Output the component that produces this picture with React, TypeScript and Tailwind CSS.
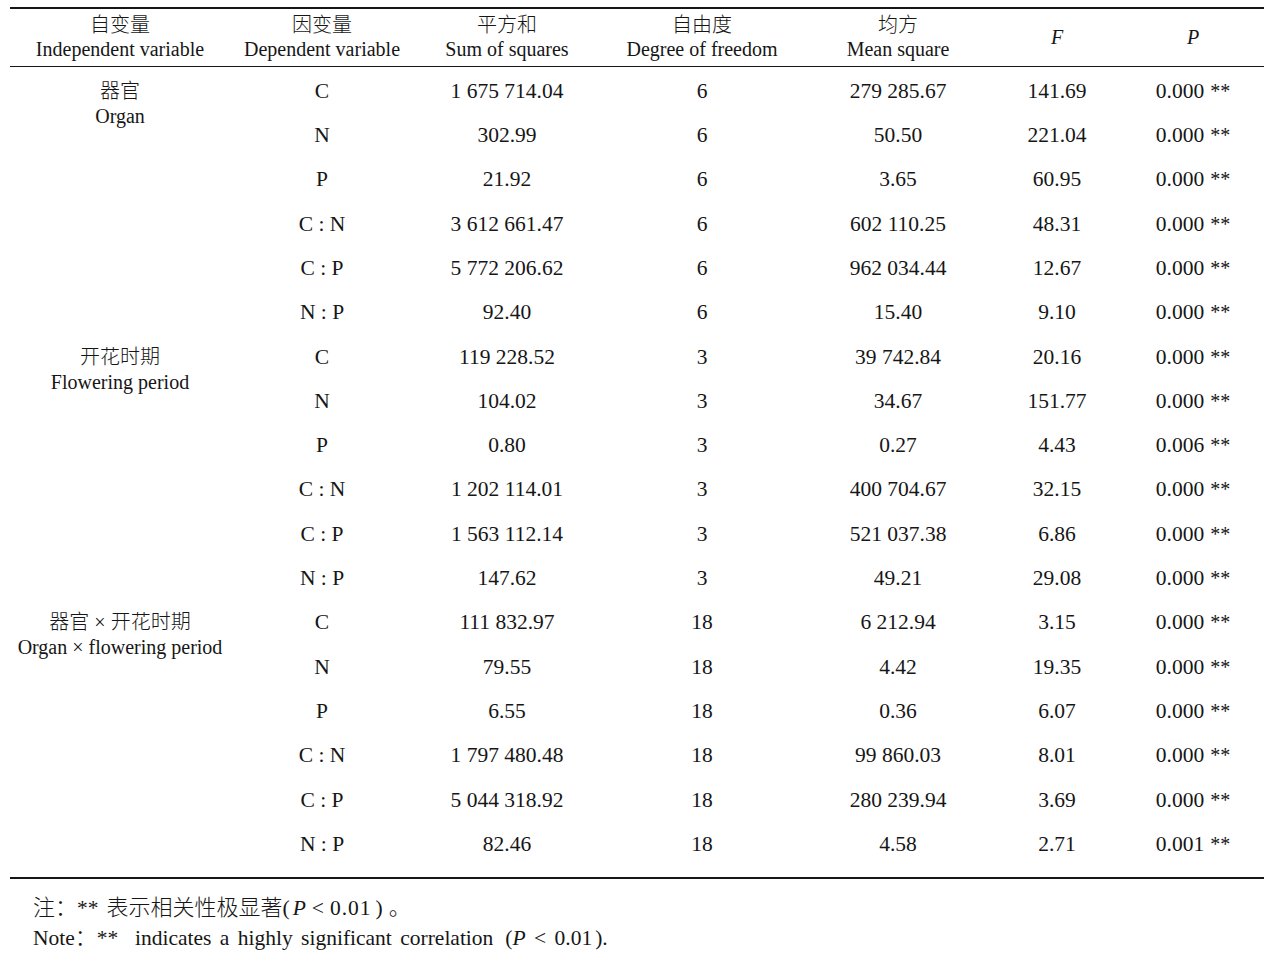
import React from "react";

type Row = [string, string, string, string, string, string];

const groups: { zh: string; en: string; rows: Row[] }[] = [
  {
    zh: "器官",
    en: "Organ",
    rows: [
      ["C", "1 675 714.04", "6", "279 285.67", "141.69", "0.000 **"],
      ["N", "302.99", "6", "50.50", "221.04", "0.000 **"],
      ["P", "21.92", "6", "3.65", "60.95", "0.000 **"],
      ["C : N", "3 612 661.47", "6", "602 110.25", "48.31", "0.000 **"],
      ["C : P", "5 772 206.62", "6", "962 034.44", "12.67", "0.000 **"],
      ["N : P", "92.40", "6", "15.40", "9.10", "0.000 **"],
    ],
  },
  {
    zh: "开花时期",
    en: "Flowering period",
    rows: [
      ["C", "119 228.52", "3", "39 742.84", "20.16", "0.000 **"],
      ["N", "104.02", "3", "34.67", "151.77", "0.000 **"],
      ["P", "0.80", "3", "0.27", "4.43", "0.006 **"],
      ["C : N", "1 202 114.01", "3", "400 704.67", "32.15", "0.000 **"],
      ["C : P", "1 563 112.14", "3", "521 037.38", "6.86", "0.000 **"],
      ["N : P", "147.62", "3", "49.21", "29.08", "0.000 **"],
    ],
  },
  {
    zh: "器官 × 开花时期",
    en: "Organ × flowering period",
    rows: [
      ["C", "111 832.97", "18", "6 212.94", "3.15", "0.000 **"],
      ["N", "79.55", "18", "4.42", "19.35", "0.000 **"],
      ["P", "6.55", "18", "0.36", "6.07", "0.000 **"],
      ["C : N", "1 797 480.48", "18", "99 860.03", "8.01", "0.000 **"],
      ["C : P", "5 044 318.92", "18", "280 239.94", "3.69", "0.000 **"],
      ["N : P", "82.46", "18", "4.58", "2.71", "0.001 **"],
    ],
  },
];

const font = {
  fontFamily: '"Liberation Serif", "Noto Sans CJK SC", serif',
};

function HeaderCell({ zh, en }: { zh: string; en: string }) {
  return (
    <div className="flex flex-col items-center justify-center text-center">
      <div className="text-[20px] leading-[24px] font-light">{zh}</div>
      <div className="text-[20px] leading-[24px]">{en}</div>
    </div>
  );
}

function PVal({ v }: { v: string }) {
  const [num, stars] = v.split(" ");
  return (
    <div className="whitespace-pre">
      {num}
      <span className="ml-[6px] text-[20px]">{stars}</span>
    </div>
  );
}

export default function App() {
  return (
    <div className="min-h-[961px] w-[1275px] bg-white text-[#161616]" style={font}>
      <div className="ml-[10px] w-[1254px] pt-[7px]">
        {/* Header */}
        <div className="border-t-2 border-b border-[#161616] pt-[4px] pb-[5px] grid grid-cols-[220px_184px_186px_204px_188px_130px_142px]">
          <HeaderCell zh="自变量" en="Independent variable" />
          <HeaderCell zh="因变量" en="Dependent variable" />
          <HeaderCell zh="平方和" en="Sum of squares" />
          <HeaderCell zh="自由度" en="Degree of freedom" />
          <HeaderCell zh="均方" en="Mean square" />
          <div className="flex items-center justify-center text-[20px] italic">F</div>
          <div className="flex items-center justify-center text-[20px] italic">P</div>
        </div>

        {/* Body */}
        <div className="border-b-2 border-[#161616] pt-[1.8px] pb-[10.8px]">
          {groups.map((g) => (
            <div key={g.en} className="flex">
              <div className="w-[220px] shrink-0 pt-[10px] text-center text-[20px] leading-[25px]">
                <div className="font-light">{g.zh}</div>
                <div>{g.en}</div>
              </div>
              <div className="flex flex-col">
                {g.rows.map((r, i) => (
                  <div
                    key={i}
                    className="h-[44.3px] pt-[10px] grid grid-cols-[184px_186px_204px_188px_130px_142px] text-[21.5px] leading-[25px] text-center"
                  >
                    {r.slice(0, 5).map((c, j) => (
                      <div key={j} className="whitespace-pre">
                        {c}
                      </div>
                    ))}
                    <PVal v={r[5]} />
                  </div>
                ))}
              </div>
            </div>
          ))}
        </div>

        {/* Notes */}
        <div className="pl-[23px] pt-[14.5px] text-[21.5px] leading-[29px]">
          <div className="whitespace-pre">
            <span className="font-light text-[22px]">注：</span>**
            <span className="font-light text-[22px] ml-[8px]">表示相关性极显著</span>
            <span>(</span>
            <i className="ml-[3px]">P</i>
            <span className="mx-[6px]">&lt;</span>
            <span className="tracking-[1px]">0.01</span>
            <span className="ml-[4px]">)</span>
            <span className="font-light text-[22px] ml-[6px]">。</span>
          </div>
          <div className="whitespace-pre [word-spacing:3px]">
            Note<span className="font-light text-[22px]">：</span>**{"  "}indicates a highly significant correlation
            <span className="ml-[12px]">(</span>
            <i>P</i> &lt; 0.01<span className="ml-[3px]">).</span>
          </div>
        </div>
      </div>
    </div>
  );
}
